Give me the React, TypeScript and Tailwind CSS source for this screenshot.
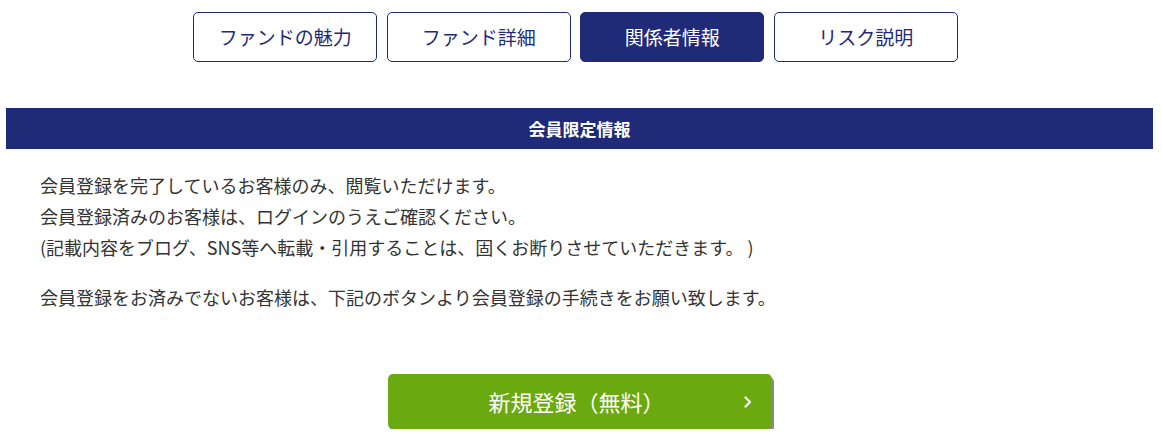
import React from 'react';

const tabs = [
  { label: 'ファンドの魅力', active: false },
  { label: 'ファンド詳細', active: false },
  { label: '関係者情報', active: true },
  { label: 'リスク説明', active: false },
];

export default function App() {
  return (
    <div className="w-[1162px] bg-white font-['Noto_Sans_CJK_JP','Noto_Sans',sans-serif] text-[#333333]">
      {/* Tabs */}
      <div className="flex justify-center gap-[9.5px] pt-3 pr-[11px]">
        {tabs.map((t) => (
          <button
            key={t.label}
            className={`w-[184px] h-[50px] rounded-[5px] border border-[#1f2a78] text-[19px] flex items-center justify-center ${
              t.active ? 'bg-[#1f2a78] text-white' : 'bg-white text-[#1f2a78]'
            }`}
          >
            {t.label}
          </button>
        ))}
      </div>

      {/* Members only section */}
      <div className="mt-[46px] ml-[6px] w-[1147px]">
        <div className="h-[41px] bg-[#1f2a78] text-white text-[17px] font-bold flex items-center justify-center">
          会員限定情報
        </div>
        <div className="px-[34px] pt-[21px] text-[18px] leading-[31px]">
          <p>会員登録を完了しているお客様のみ、閲覧いただけます。</p>
          <p>会員登録済みのお客様は、ログインのうえご確認ください。</p>
          <p>(記載内容をブログ、SNS等へ転載・引用することは、固くお断りさせていただきます。 )</p>
          <p className="mt-[19px]">会員登録をお済みでないお客様は、下記のボタンより会員登録の手続きをお願い致します。</p>
        </div>
        <div className="flex justify-center pt-[61px]">
          <button className="relative w-[384px] h-[55px] rounded-[5px] bg-[#6aaa10] text-white text-[22px] shadow-[2px_3px_0_#8a8a8a] flex items-center justify-center">
            <span className="-ml-[6px]">新規登録（無料）</span>
            <svg className="absolute right-[19px] top-1/2 -translate-y-1/2" width="10" height="14" viewBox="0 0 10 14" fill="none">
              <path d="M2.5 2.5L7 7l-4.5 4.5" stroke="white" strokeWidth="2.2" strokeLinecap="round" strokeLinejoin="round" />
            </svg>
          </button>
        </div>
      </div>
    </div>
  );
}
